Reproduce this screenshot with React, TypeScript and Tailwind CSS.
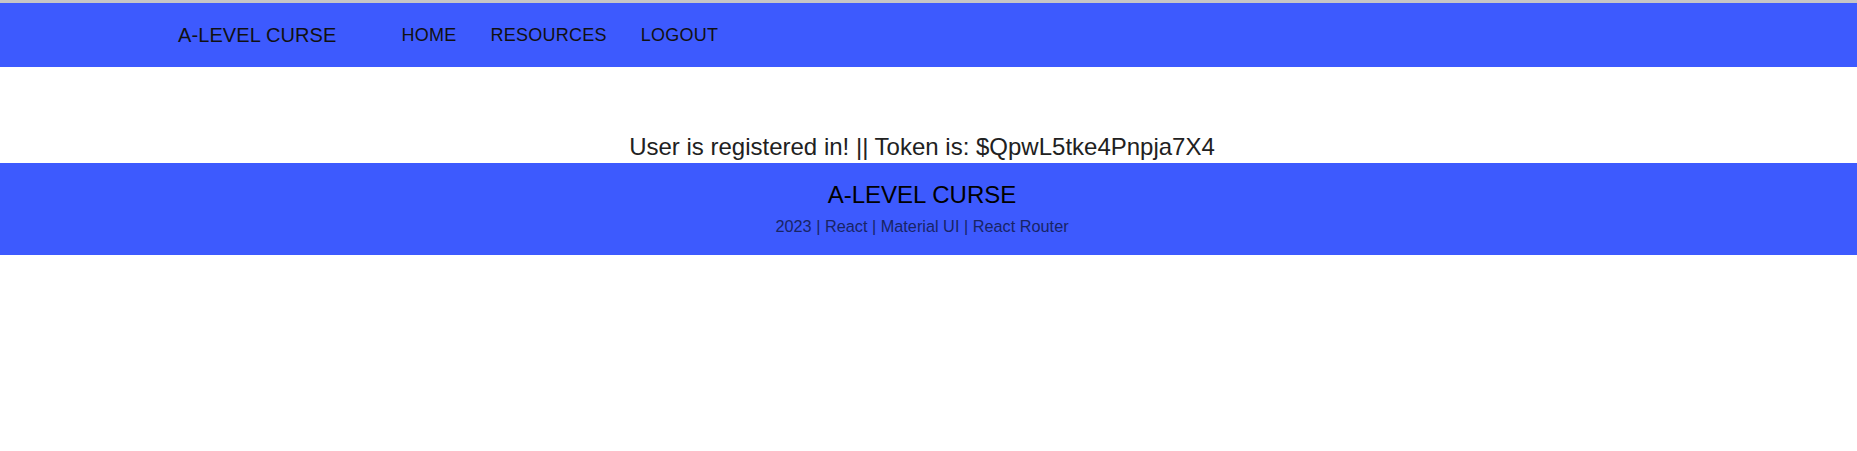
const navLinks = ['HOME', 'RESOURCES', 'LOGOUT'];

function Header() {
  return (
    <header className="border-t-[3px] border-[#c6c6c6] bg-[#3d5afe]">
      <div className="flex h-[64px] items-center pl-[178px]">
        <span className="text-[20px] leading-[24px] tracking-[0.1px] text-[#111]">A-LEVEL CURSE</span>
        <nav className="ml-[65px] flex items-center gap-[34px]">
          {navLinks.map((link) => (
            <span key={link} className="text-[18px] leading-[24px] tracking-[0.25px] text-[#111]">
              {link}
            </span>
          ))}
        </nav>
      </div>
    </header>
  );
}

function Footer() {
  return (
    <footer className="bg-[#3d5afe] pt-[16px] pb-[17px]">
      <div className="flex flex-col items-center pr-[13px]">
        <h2 className="text-[24px] leading-[32px] text-black">A-LEVEL CURSE</h2>
        <p className="mt-[3px] text-[16.3px] leading-[24px] text-[#182466]">
          2023 | React | Material UI | React Router
        </p>
      </div>
    </footer>
  );
}

export default function App() {
  const token = '$QpwL5tke4Pnpja7X4';

  return (
    <div className="min-h-[451px] bg-white font-['Liberation_Sans',Arial,sans-serif]">
      <Header />
      <main className="flex justify-center pt-[64px] pr-[13px]">
        <h1 className="text-[24px] leading-[32px] text-[#212121]">
          User is registered in! || Token is: {token}
        </h1>
      </main>
      <Footer />
    </div>
  );
}
